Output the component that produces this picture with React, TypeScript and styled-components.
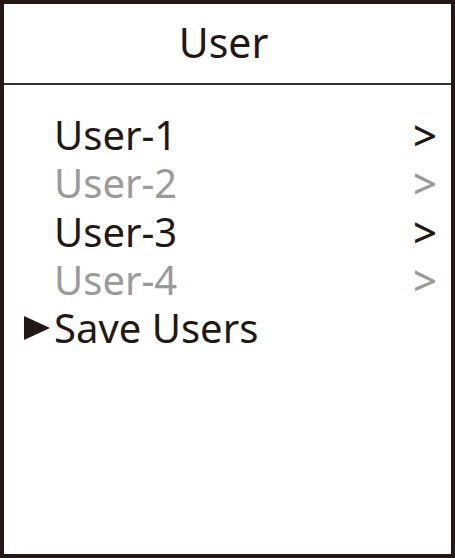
import React from "react";
import styled, { createGlobalStyle } from "styled-components";

const Global = createGlobalStyle`
  html, body { margin: 0; padding: 0; background: #ffffff; }
  * { box-sizing: border-box; }
`;

const Frame = styled.div`
  width: 455px;
  height: 558px;
  border: 4px solid #231815;
  background: #ffffff;
  display: flex;
  flex-direction: column;
  font-family: "Noto Sans", "Open Sans", sans-serif;
  color: #231815;
`;

const Header = styled.div`
  height: 81px;
  display: flex;
  align-items: center;
  justify-content: center;
  font-size: 41px;
  line-height: 1;
  padding: 0 8px 2px 0;
  border-bottom: 2px solid #3a3232;
`;

const List = styled.div`
  display: flex;
  flex-direction: column;
  padding: 26px 14px 0 20px;
`;

const Row = styled.div<{ $dim?: boolean }>`
  display: flex;
  align-items: center;
  height: 48.3px;
  font-size: 40px;
  line-height: 48px;
  color: ${(p) => (p.$dim ? "#9a9a9a" : "#231815")};
`;

const Marker = styled.span`
  width: 30px;
  display: flex;
  align-items: center;
`;

const Label = styled.span`
  flex: 1;
`;

const Chevron = styled.span`
  font-size: 42px;
  font-weight: 500;
`;

const Triangle = () => (
  <svg width="26" height="24" viewBox="0 0 26 24">
    <polygon points="0,0 26,12 0,24" fill="#231815" />
  </svg>
);

const items = [
  { label: "User-1", dim: false },
  { label: "User-2", dim: true },
  { label: "User-3", dim: false },
  { label: "User-4", dim: true },
];

export default function App() {
  return (
    <>
      <Global />
      <Frame>
        <Header>User</Header>
        <List>
          {items.map((it) => (
            <Row key={it.label} $dim={it.dim}>
              <Marker />
              <Label>{it.label}</Label>
              <Chevron>&gt;</Chevron>
            </Row>
          ))}
          <Row>
            <Marker>
              <Triangle />
            </Marker>
            <Label>Save Users</Label>
          </Row>
        </List>
      </Frame>
    </>
  );
}
